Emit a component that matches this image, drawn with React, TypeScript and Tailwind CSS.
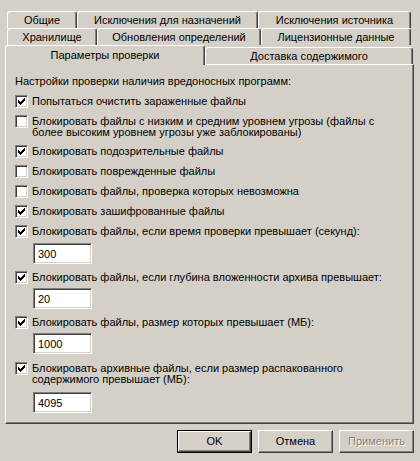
import type { ReactNode } from "react";

const raised =
  "border border-t-white border-l-white border-r-[#404040] border-b-[#404040] shadow-[inset_-1px_-1px_0_#808080]";
const sunken =
  "border border-t-[#808080] border-l-[#808080] border-r-white border-b-white shadow-[inset_1px_1px_0_#404040,inset_-1px_-1px_0_#d4d0c8]";

function Tab({ label, w, selected }: { label: string; w: string; selected?: boolean }) {
  return (
    <div
      className={`${w} ${
        selected ? "h-[20px] -mb-[1px] relative z-10" : "h-[17px]"
      } flex items-center justify-center bg-[#d4d0c8] rounded-t-[3px] border-t border-l border-t-white border-l-white border-r border-r-[#404040] shadow-[inset_-1px_0_0_#808080] leading-[13px]`}
    >
      {label}
    </div>
  );
}

function Tick() {
  return (
    <svg width="13" height="13" viewBox="0 0 13 13" shapeRendering="crispEdges" className="absolute -left-[1px] -top-[1px]">
      <path
        d="M3 5h1v3h-1z M4 6h1v3h-1z M5 7h1v3h-1z M6 6h1v3h-1z M7 5h1v3h-1z M8 4h1v3h-1z M9 3h1v3h-1z"
        fill="#000"
      />
    </svg>
  );
}

function Check({ checked, children }: { checked?: boolean; children: ReactNode }) {
  return (
    <div className="flex items-start gap-[4px] pt-[3px] pb-[4px]">
      <div className={`relative w-[13px] h-[13px] shrink-0 bg-white ${sunken}`}>{checked && <Tick />}</div>
      <div className="leading-[11px] mt-[1px]">{children}</div>
    </div>
  );
}

function Field({ value, className }: { value: string; className?: string }) {
  return (
    <input
      type="text"
      readOnly
      defaultValue={value}
      className={`ml-[18px] w-[59px] h-[21px] bg-white pl-[4px] outline-none text-[11px] text-black ${sunken} ${className ?? ""}`}
    />
  );
}

function Button({ label, primary, disabled }: { label: string; primary?: boolean; disabled?: boolean }) {
  return (
    <div className={`w-[75px] h-[23px] ${primary ? "border border-black" : ""}`}>
      <div
        className={`w-full h-full flex items-center justify-center bg-[#d4d0c8] ${raised} ${
          disabled ? "text-[#808080] [text-shadow:1px_1px_0_#fff]" : ""
        }`}
      >
        {label}
      </div>
    </div>
  );
}

export default function App() {
  return (
    <div
      className="w-[420px] h-[461px] bg-[#d4d0c8] text-black text-[11px] overflow-hidden"
      style={{ fontFamily: '"Liberation Sans", Arial, sans-serif' }}
    >
      <div className="pt-[11px]">
        <div className="flex pl-[7px]">
          <Tab label="Общие" w="w-[70px]" />
          <Tab label="Исключения для назначений" w="w-[181px]" />
          <Tab label="Исключения источника" w="w-[153px]" />
        </div>
        <div className="flex pl-[7px]">
          <Tab label="Хранилище" w="w-[90px]" />
          <Tab label="Обновления определений" w="w-[164px]" />
          <Tab label="Лицензионные данные" w="w-[150px]" />
        </div>
        <div className="flex items-end pl-[5px] h-[19px]">
          <Tab label="Параметры проверки" w="w-[200px]" selected />
          <Tab label="Доставка содержимого" w="w-[208px]" />
        </div>
      </div>

      <div className={`ml-[5px] w-[409px] h-[360px] ${raised} pl-[9px] pt-[10px] flex flex-col items-start`}>
        <div className="leading-[13px] mb-[4px]">Настройки проверки наличия вредоносных программ:</div>
        <Check checked>Попытаться очистить зараженные файлы</Check>
        <Check>
          Блокировать файлы с низким и средним уровнем угрозы (файлы с
          <br />
          более высоким уровнем угрозы уже заблокированы)
        </Check>
        <Check checked>Блокировать подозрительные файлы</Check>
        <Check>Блокировать поврежденные файлы</Check>
        <Check>Блокировать файлы, проверка которых невозможна</Check>
        <Check checked>Блокировать зашифрованные файлы</Check>
        <Check checked>Блокировать файлы, если время проверки превышает (секунд):</Check>
        <Field value="300" className="mt-[1px] mb-[4px]" />
        <Check checked>Блокировать файлы, если глубина вложенности архива превышает:</Check>
        <Field value="20" className="mb-[4px]" />
        <Check checked>Блокировать файлы, размер которых превышает (МБ):</Check>
        <Field value="1000" className="mb-[5px]" />
        <Check checked>
          Блокировать архивные файлы, если размер распакованного
          <br />
          содержимого превышает (МБ):
        </Check>
        <Field value="4095" className="mt-[3px]" />
      </div>

      <div className="flex justify-end gap-[6px] pr-[6px] mt-[6px]">
        <Button label="OK" primary />
        <Button label="Отмена" />
        <Button label="Применить" disabled />
      </div>
    </div>
  );
}
